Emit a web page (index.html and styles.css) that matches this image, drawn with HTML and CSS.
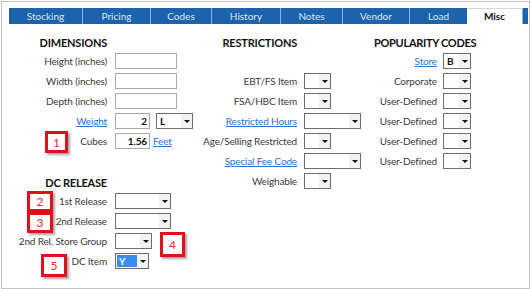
FILE: index.html
```html
<!DOCTYPE html>
<html>
<head>
<meta charset="utf-8">
<link rel="stylesheet" href="styles.css">
</head>
<body>
<div class="frame">
  <div class="tabs">
    <div class="tab">Stocking</div>
    <div class="tab">Pricing</div>
    <div class="tab">Codes</div>
    <div class="tab">History</div>
    <div class="tab">Notes</div>
    <div class="tab">Vendor</div>
    <div class="tab">Load</div>
    <div class="tab active">Misc</div>
    <div class="tab tail"></div>
  </div>
  <div class="main">
    <div class="col col1">
      <div class="row head"><div class="lbl">DIMENSIONS</div></div>
      <div class="row"><div class="lbl">Height (inches)</div><div class="inp w62"></div></div>
      <div class="row"><div class="lbl">Width (inches)</div><div class="inp w62"></div></div>
      <div class="row"><div class="lbl">Depth (inches)</div><div class="inp w62"></div></div>
      <div class="row"><div class="lbl"><a class="lnk">Weight</a></div><div class="inp w35 num">2</div><div class="sel w37 ml6"><span class="val">L</span><span class="arr"></span></div></div>
      <div class="row"><div class="lbl">Cubes</div><div class="inp w35 num">1.56</div><a class="lnk ml3">Feet</a></div>
      <div class="row head dc"><div class="lbl">DC RELEASE</div></div>
      <div class="row"><div class="lbl">1st Release</div><div class="sel w56"><span class="val"></span><span class="arr"></span></div></div>
      <div class="row"><div class="lbl">2nd Release</div><div class="sel w56"><span class="val"></span><span class="arr"></span></div></div>
      <div class="row"><div class="lbl">2nd Rel. Store Group</div><div class="sel w37"><span class="val"></span><span class="arr"></span></div></div>
      <div class="row"><div class="lbl">DC Item</div><div class="sel w34"><span class="val hl">Y</span><span class="arr"></span></div></div>
    </div>
    <div class="col col2">
      <div class="row head"><div class="lbl">RESTRICTIONS</div></div>
      <div class="row"></div>
      <div class="row"><div class="lbl">EBT/FS Item</div><div class="sel w27"><span class="val"></span><span class="arr"></span></div></div>
      <div class="row"><div class="lbl">FSA/HBC Item</div><div class="sel w27"><span class="val"></span><span class="arr"></span></div></div>
      <div class="row"><div class="lbl"><a class="lnk">Restricted Hours</a></div><div class="sel w57"><span class="val"></span><span class="arr"></span></div></div>
      <div class="row"><div class="lbl">Age/Selling Restricted</div><div class="sel w27"><span class="val"></span><span class="arr"></span></div></div>
      <div class="row"><div class="lbl"><a class="lnk">Special Fee Code</a></div><div class="sel w57"><span class="val"></span><span class="arr"></span></div></div>
      <div class="row"><div class="lbl">Weighable</div><div class="sel w27"><span class="val"></span><span class="arr"></span></div></div>
    </div>
    <div class="col col3">
      <div class="row head"><div class="ptitle">POPULARITY CODES</div></div>
      <div class="row"><div class="lbl"><a class="lnk">Store</a></div><div class="sel w28"><span class="val">B</span><span class="arr"></span></div></div>
      <div class="row"><div class="lbl">Corporate</div><div class="sel w28"><span class="val"></span><span class="arr"></span></div></div>
      <div class="row"><div class="lbl">User-Defined</div><div class="sel w28"><span class="val"></span><span class="arr"></span></div></div>
      <div class="row"><div class="lbl">User-Defined</div><div class="sel w28"><span class="val"></span><span class="arr"></span></div></div>
      <div class="row"><div class="lbl">User-Defined</div><div class="sel w28"><span class="val"></span><span class="arr"></span></div></div>
      <div class="row"><div class="lbl">User-Defined</div><div class="sel w28"><span class="val"></span><span class="arr"></span></div></div>
    </div>
  </div>
  <div class="note n1">1</div>
  <div class="note n2">2</div>
  <div class="note n3">3</div>
  <div class="note n4">4</div>
  <div class="note n5">5</div>
</div>
</body>
</html>
```

FILE: styles.css
```css
* { box-sizing: border-box; }
html, body { margin: 0; padding: 0; background: #fff; }
body { font-family: Lato, "Liberation Sans", sans-serif; font-size: 10px; letter-spacing: -0.15px; color: #3a3a3a; }

.frame {
  position: relative;
  margin: 1px 0 0 1px;
  width: 529px;
  height: 288px;
  border: 1px solid #c2c2c2;
  padding: 6px 0 0 7px;
}

.tabs { display: flex; height: 16px; }
.tab {
  background: #1c63ab;
  color: #dde7f2;
  font-size: 10px;
  letter-spacing: 0;
  line-height: 16px;
  text-align: center;
  border-right: 1px solid #8db3d8;
}
.tab:nth-child(1) { width: 74px; }
.tab:nth-child(2) { width: 68px; }
.tab:nth-child(3) { width: 61px; }
.tab:nth-child(4) { width: 69px; }
.tab:nth-child(5) { width: 62px; }
.tab:nth-child(6) { width: 67px; }
.tab:nth-child(7) { width: 57px; border-right: none; }
.tab.active { width: 56px; background: #fff; color: #111; font-weight: bold; border-top: 1px solid #d8d8d8; line-height: 15px; }
.tab.tail { width: 5px; border-right: none; }

.main { display: flex; padding: 11px 0 0 1px; }
.col { display: flex; flex-direction: column; }
.col1 { width: 190px; --lw: 97px; --gap: 8px; }
.col2 { width: 165px; --lw: 97px; --gap: 7px; }
.col3 { --lw: 72px; --gap: 6px; }

.row { display: flex; align-items: center; height: 16px; margin-bottom: 4px; }
.row.head { height: 15px; margin-bottom: 3px; }
.row.dc { margin-top: 22px; }
.lbl {
  width: var(--lw);
  margin-right: var(--gap);
  text-align: right;
  white-space: nowrap;
  flex: none;
}
.head .lbl, .ptitle { font-size: 11px; font-weight: bold; color: #111; letter-spacing: -0.2px; }
.ptitle { margin-left: 9px; white-space: nowrap; letter-spacing: -0.3px; }

.lnk { color: #2d6fd2; text-decoration: underline; }
.ml3 { margin-left: 3px; }
.ml6 { margin-left: 6px; }

.inp {
  height: 16px;
  border: 1px solid #a9a9a9;
  background: #fff;
  flex: none;
}
.inp.num { text-align: right; font-weight: bold; font-size: 10px; line-height: 14px; padding-right: 2px; color: #111; }

.sel {
  display: flex;
  height: 16px;
  border: 1px solid #6e6e6e;
  background: #fff;
  flex: none;
}
.sel .val { flex: 1; padding-left: 3px; font-weight: bold; font-size: 10px; line-height: 14px; color: #111; }
.sel .val.hl { background: #3b8ded; color: #fff; margin: 1px 0 1px 1px; line-height: 12px; padding-left: 2px; }
.sel .arr {
  width: 11px;
  background: #f2f2f2;
  display: flex;
  align-items: center;
  justify-content: center;
}
.sel .arr::after {
  content: "";
  border-left: 3px solid transparent;
  border-right: 3px solid transparent;
  border-top: 3px solid #111;
}

.w27 { width: 27px; }
.w28 { width: 28px; }
.w34 { width: 34px; }
.w35 { width: 35px; }
.w37 { width: 37px; }
.w56 { width: 56px; }
.w57 { width: 57px; }
.w62 { width: 62px; }

.note {
  position: absolute;
  border: 3px solid #e3101b;
  box-shadow: 2px 2px 2px rgba(0,0,0,0.35);
  color: #ee2a35;
  font-size: 12px;
  letter-spacing: 0;
  display: flex;
  align-items: center;
  justify-content: center;
  background: #fff;
}
.n1 { left: 43px; top: 129px; width: 23px; height: 22px; }
.n2 { left: 25px; top: 189px; width: 26px; height: 21px; }
.n3 { left: 25px; top: 210px; width: 26px; height: 21px; }
.n4 { left: 158px; top: 230px; width: 25px; height: 25px; }
.n5 { left: 39px; top: 252px; width: 26px; height: 23px; }
```
